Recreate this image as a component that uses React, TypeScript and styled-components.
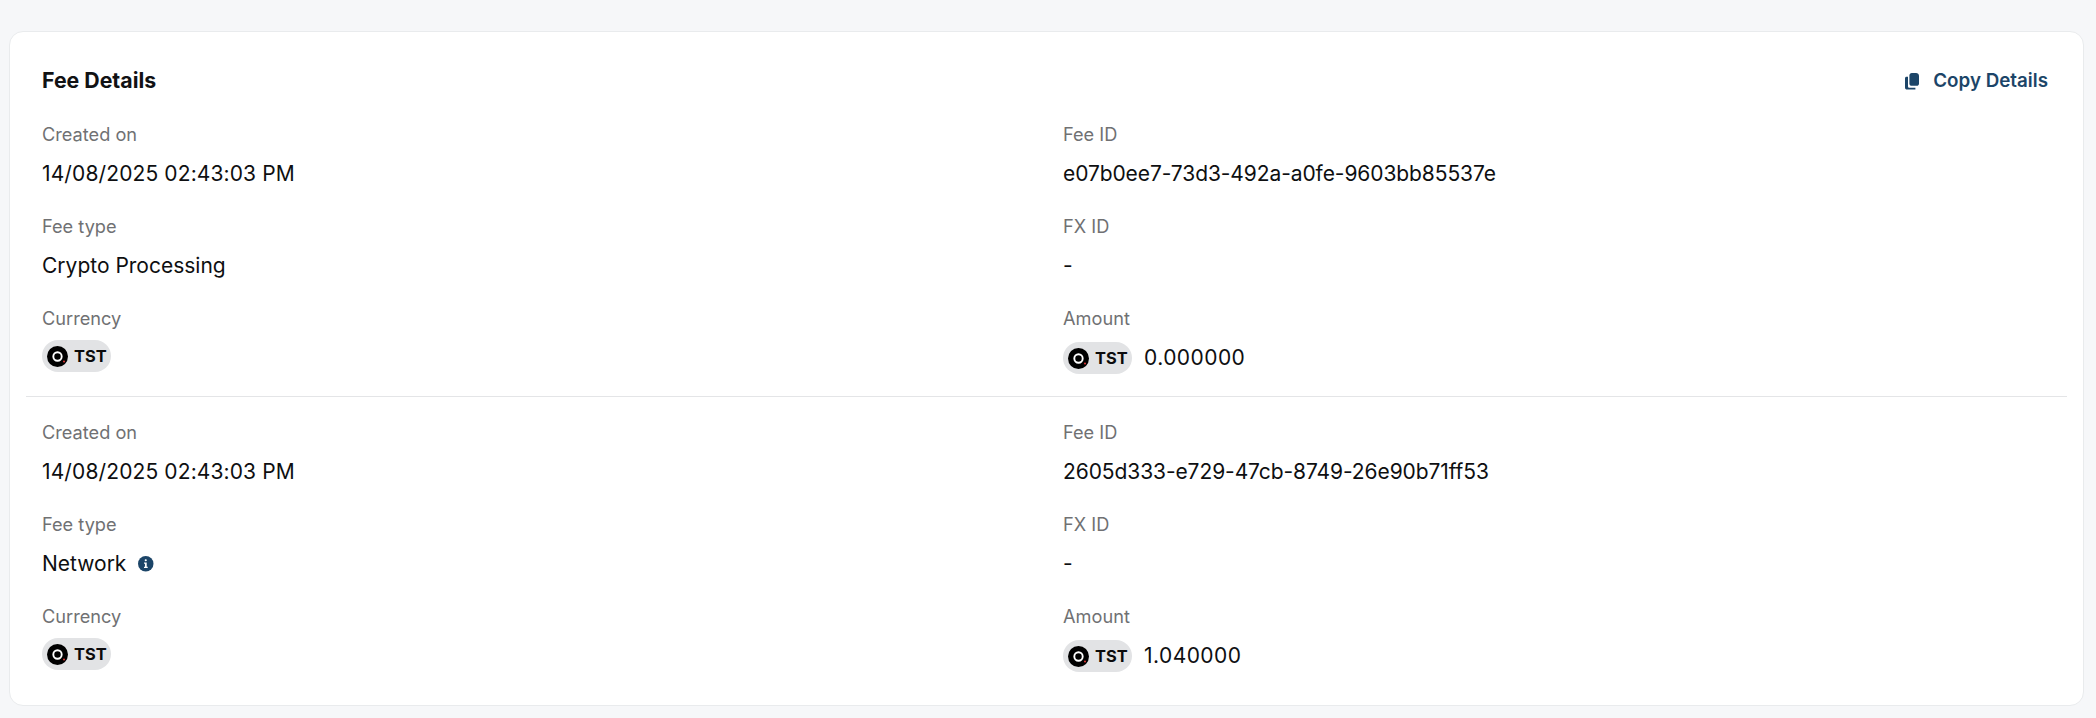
import React from "react";
import styled, { createGlobalStyle } from "styled-components";

const Global = createGlobalStyle`
  html, body { margin: 0; padding: 0; background: #f6f7f9; }
  body { font-family: Inter, "Noto Sans", "Liberation Sans", sans-serif; }
`;

const Page = styled.div`
  padding: 31px 12px 12px 9px;
  height: 718px;
  box-sizing: border-box;
`;

const Card = styled.section`
  background: #fff;
  border: 1px solid #e9ebed;
  border-radius: 14px;
  padding: 0 16px;
  box-sizing: border-box;
  height: 675px;
`;

const Header = styled.header`
  display: flex;
  align-items: center;
  justify-content: space-between;
  height: 36px;
  padding: 30px 19px 0 16px;
`;

const Title = styled.h2`
  margin: 0;
  font-size: 21.3px;
  line-height: 24px;
  font-weight: 700;
  color: #111214;
`;

const CopyButton = styled.button`
  display: inline-flex;
  align-items: center;
  gap: 14px;
  padding: 2px 0 0;
  border: 0;
  background: none;
  font: 600 18.8px/24px Inter, sans-serif;
  color: #1c4568;
`;

const Section = styled.div<{ $last?: boolean }>`
  display: grid;
  grid-template-columns: 1021px 1fr;
  row-gap: 24px;
  padding: ${(p) => (p.$last ? "22px 16px 0" : "23px 16px 23px")};
  border-bottom: ${(p) => (p.$last ? "0" : "1px solid #e4e5e7")};
`;

const Field = styled.div`
  display: flex;
  flex-direction: column;
  gap: 12px;
`;

const Label = styled.div`
  font-size: 18.2px;
  line-height: 26px;
  color: #707173;
`;

const Value = styled.div`
  display: flex;
  align-items: center;
  gap: 12px;
  height: 30px;
  font-size: 21px;
  line-height: 30px;
  color: #0e0f11;
`;

const DateValue = styled(Value)`
  letter-spacing: 0.12px;
`;

const HashValue = styled(Value)`
  letter-spacing: -0.09px;
`;

const CurrencyValue = styled(Value)`
  margin-top: -2px;
  margin-bottom: 2px;
`;

const AmountValue = styled(Value)`
  letter-spacing: 0.45px;
`;

const Pill = styled.span`
  display: inline-flex;
  align-items: center;
  gap: 6px;
  width: 69px;
  height: 32px;
  flex: none;
  box-sizing: border-box;
  padding-left: 5px;
  border-radius: 16px;
  background: #e2e3e5;
  font-size: 16.4px;
  font-weight: 700;
  letter-spacing: 0;
  color: #0b0b0c;
`;

const CopyIcon = () => (
  <svg width="14" height="17" viewBox="0 0 14 17" aria-hidden="true">
    <path d="M4.4 2.4C4.4 1 5.4 0 6.8 0H11C12.7 0 14 1.3 14 3V10.4C14 11.8 13 12.8 11.6 12.8H6.8C5.4 12.8 4.4 11.8 4.4 10.4Z" fill="#1c4568" />
    <path d="M1.6 3.8H3V13.2C3 14.2 3.6 14.8 4.6 14.8H10.4V16.6H2.2C.8 16.6 0 15.7 0 14.4V5.4C0 4.4.6 3.8 1.6 3.8Z" fill="#1c4568" />
  </svg>
);

const Coin = () => (
  <svg width="21" height="21" viewBox="0 0 21 21" aria-hidden="true">
    <circle cx="10.5" cy="10.5" r="10.5" fill="#000" />
    <circle cx="10.5" cy="10.5" r="4.2" fill="none" stroke="#fff" strokeWidth="1.9" />
    <circle cx="17" cy="15.4" r="1" fill="#e53935" />
  </svg>
);

const Info = () => (
  <svg width="15.5" height="15.5" viewBox="0 0 16 16" aria-hidden="true">
    <circle cx="8" cy="8" r="8" fill="#1c4568" />
    <rect x="6.9" y="3.3" width="2.2" height="2.2" rx="1" fill="#fff" />
    <path d="M6.2 6.7H9V11H10V12.4H6.2V11H7.2V8.1H6.2Z" fill="#fff" />
  </svg>
);

const Token = () => (
  <Pill>
    <Coin />
    TST
  </Pill>
);

type Fee = { id: string; type: string; info?: boolean; amount: string };

const fees: Fee[] = [
  { id: "e07b0ee7-73d3-492a-a0fe-9603bb85537e", type: "Crypto Processing", amount: "0.000000" },
  { id: "2605d333-e729-47cb-8749-26e90b71ff53", type: "Network", info: true, amount: "1.040000" },
];

const FeeSection = ({ fee, last }: { fee: Fee; last: boolean }) => (
  <Section $last={last}>
    <Field>
      <Label>Created on</Label>
      <DateValue>14/08/2025 02:43:03 PM</DateValue>
    </Field>
    <Field>
      <Label>Fee ID</Label>
      <HashValue>{fee.id}</HashValue>
    </Field>
    <Field>
      <Label>Fee type</Label>
      <Value>
        {fee.type}
        {fee.info && <Info />}
      </Value>
    </Field>
    <Field>
      <Label>FX ID</Label>
      <Value>-</Value>
    </Field>
    <Field>
      <Label>Currency</Label>
      <CurrencyValue>
        <Token />
      </CurrencyValue>
    </Field>
    <Field>
      <Label>Amount</Label>
      <AmountValue>
        <Token />
        {fee.amount}
      </AmountValue>
    </Field>
  </Section>
);

export default function App() {
  return (
    <Page>
      <Global />
      <Card>
        <Header>
          <Title>Fee Details</Title>
          <CopyButton>
            <CopyIcon />
            Copy Details
          </CopyButton>
        </Header>
        {fees.map((fee, i) => (
          <FeeSection key={fee.id} fee={fee} last={i === 1} />
        ))}
      </Card>
    </Page>
  );
}
